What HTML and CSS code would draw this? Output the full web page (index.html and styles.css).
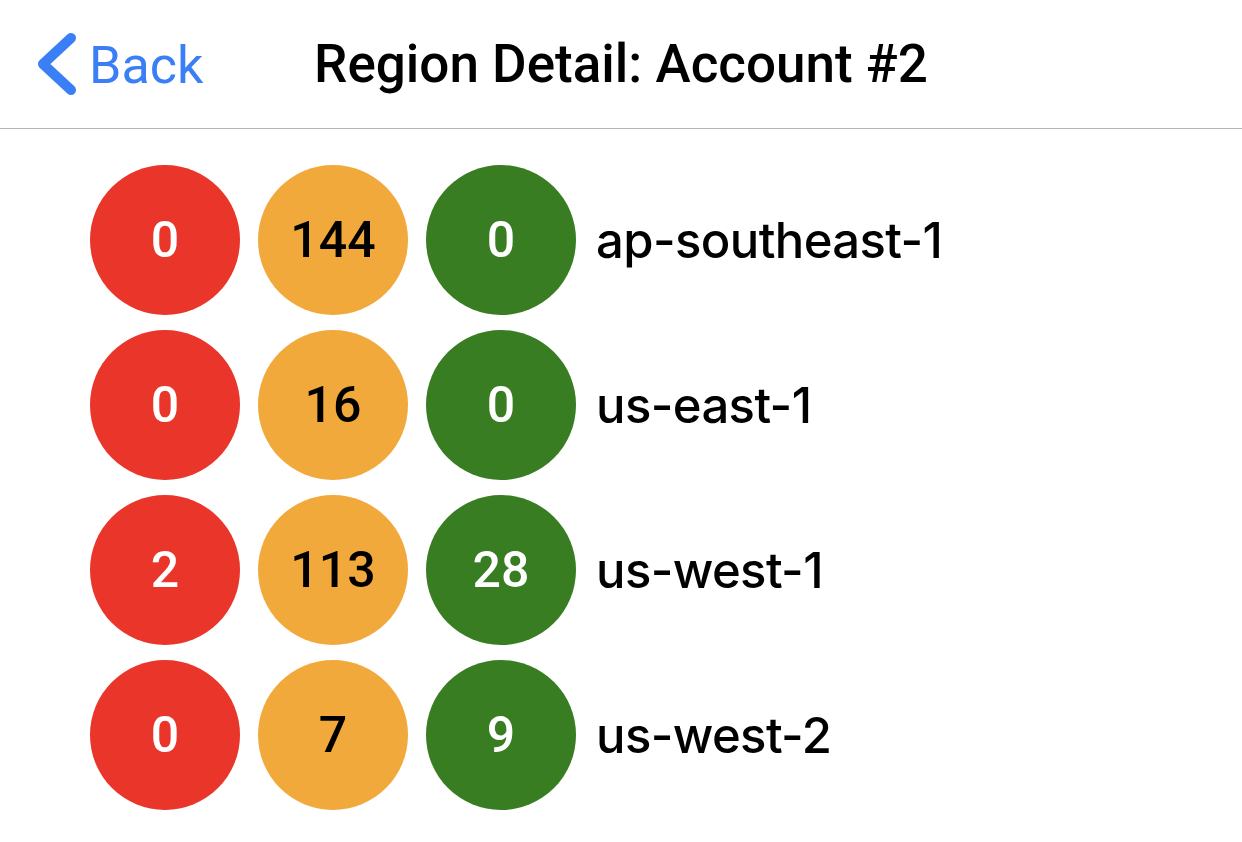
FILE: index.html
```html
<!DOCTYPE html>
<html lang="en">
<head>
    <meta charset="UTF-8">
    <title>Region Detail: Account #2</title>
    <link rel="stylesheet" href="styles.css">
</head>
<body>
    <header class="topbar">
        <a class="back" href="#">
            <svg class="chevron" width="42" height="68" viewBox="0 0 42 68">
                <polyline points="35,8 7,34 35,60" fill="none" stroke="#3a7ff6" stroke-width="10" stroke-linecap="round" stroke-linejoin="round"/>
            </svg>
            <span>Back</span>
        </a>
        <h1 class="title">Region Detail: Account #2</h1>
        <div></div>
    </header>

    <div class="regions">
        <div class="region">
            <div class="dot red">0</div>
            <div class="dot orange">144</div>
            <div class="dot green">0</div>
            <span class="name">ap-southeast-1</span>
        </div>
        <div class="region">
            <div class="dot red">0</div>
            <div class="dot orange">16</div>
            <div class="dot green">0</div>
            <span class="name">us-east-1</span>
        </div>
        <div class="region">
            <div class="dot red">2</div>
            <div class="dot orange">113</div>
            <div class="dot green">28</div>
            <span class="name">us-west-1</span>
        </div>
        <div class="region">
            <div class="dot red">0</div>
            <div class="dot orange">7</div>
            <div class="dot green">9</div>
            <span class="name">us-west-2</span>
        </div>
    </div>
</body>
</html>
```

FILE: styles.css
```css
body {
    margin: 0;
    padding: 0;
    background-color: #fff;
    font-family: Roboto, "Liberation Sans", sans-serif;
    color: #000;
}

.topbar {
    display: grid;
    grid-template-columns: 1fr auto 1fr;
    align-items: center;
    height: 128px;
    border-bottom: 1px solid #b4b4b4;
}

.back {
    display: flex;
    align-items: center;
    gap: 11px;
    padding-left: 36px;
    color: #3a7ff6;
    text-decoration: none;
    font-size: 52px;
}

.back span {
    margin-top: 2px;
}

.title {
    margin: 0;
    font-size: 53px;
    font-weight: 500;
}

.regions {
    display: flex;
    flex-direction: column;
    gap: 15px;
    padding: 36px 0 0 90px;
}

.region {
    display: flex;
    align-items: center;
    gap: 18px;
}

.dot {
    width: 150px;
    height: 150px;
    border-radius: 50%;
    display: flex;
    align-items: center;
    justify-content: center;
    font-size: 50px;
    font-weight: 500;
    color: #fff;
}

.red {
    background-color: #e9352a;
}

.orange {
    background-color: #f2a93b;
    color: #000;
}

.green {
    background-color: #387d22;
}

.name {
    margin-left: 2px;
    font-family: Inter, Roboto, sans-serif;
    font-size: 49px;
    font-weight: 500;
    letter-spacing: -0.6px;
}
```
